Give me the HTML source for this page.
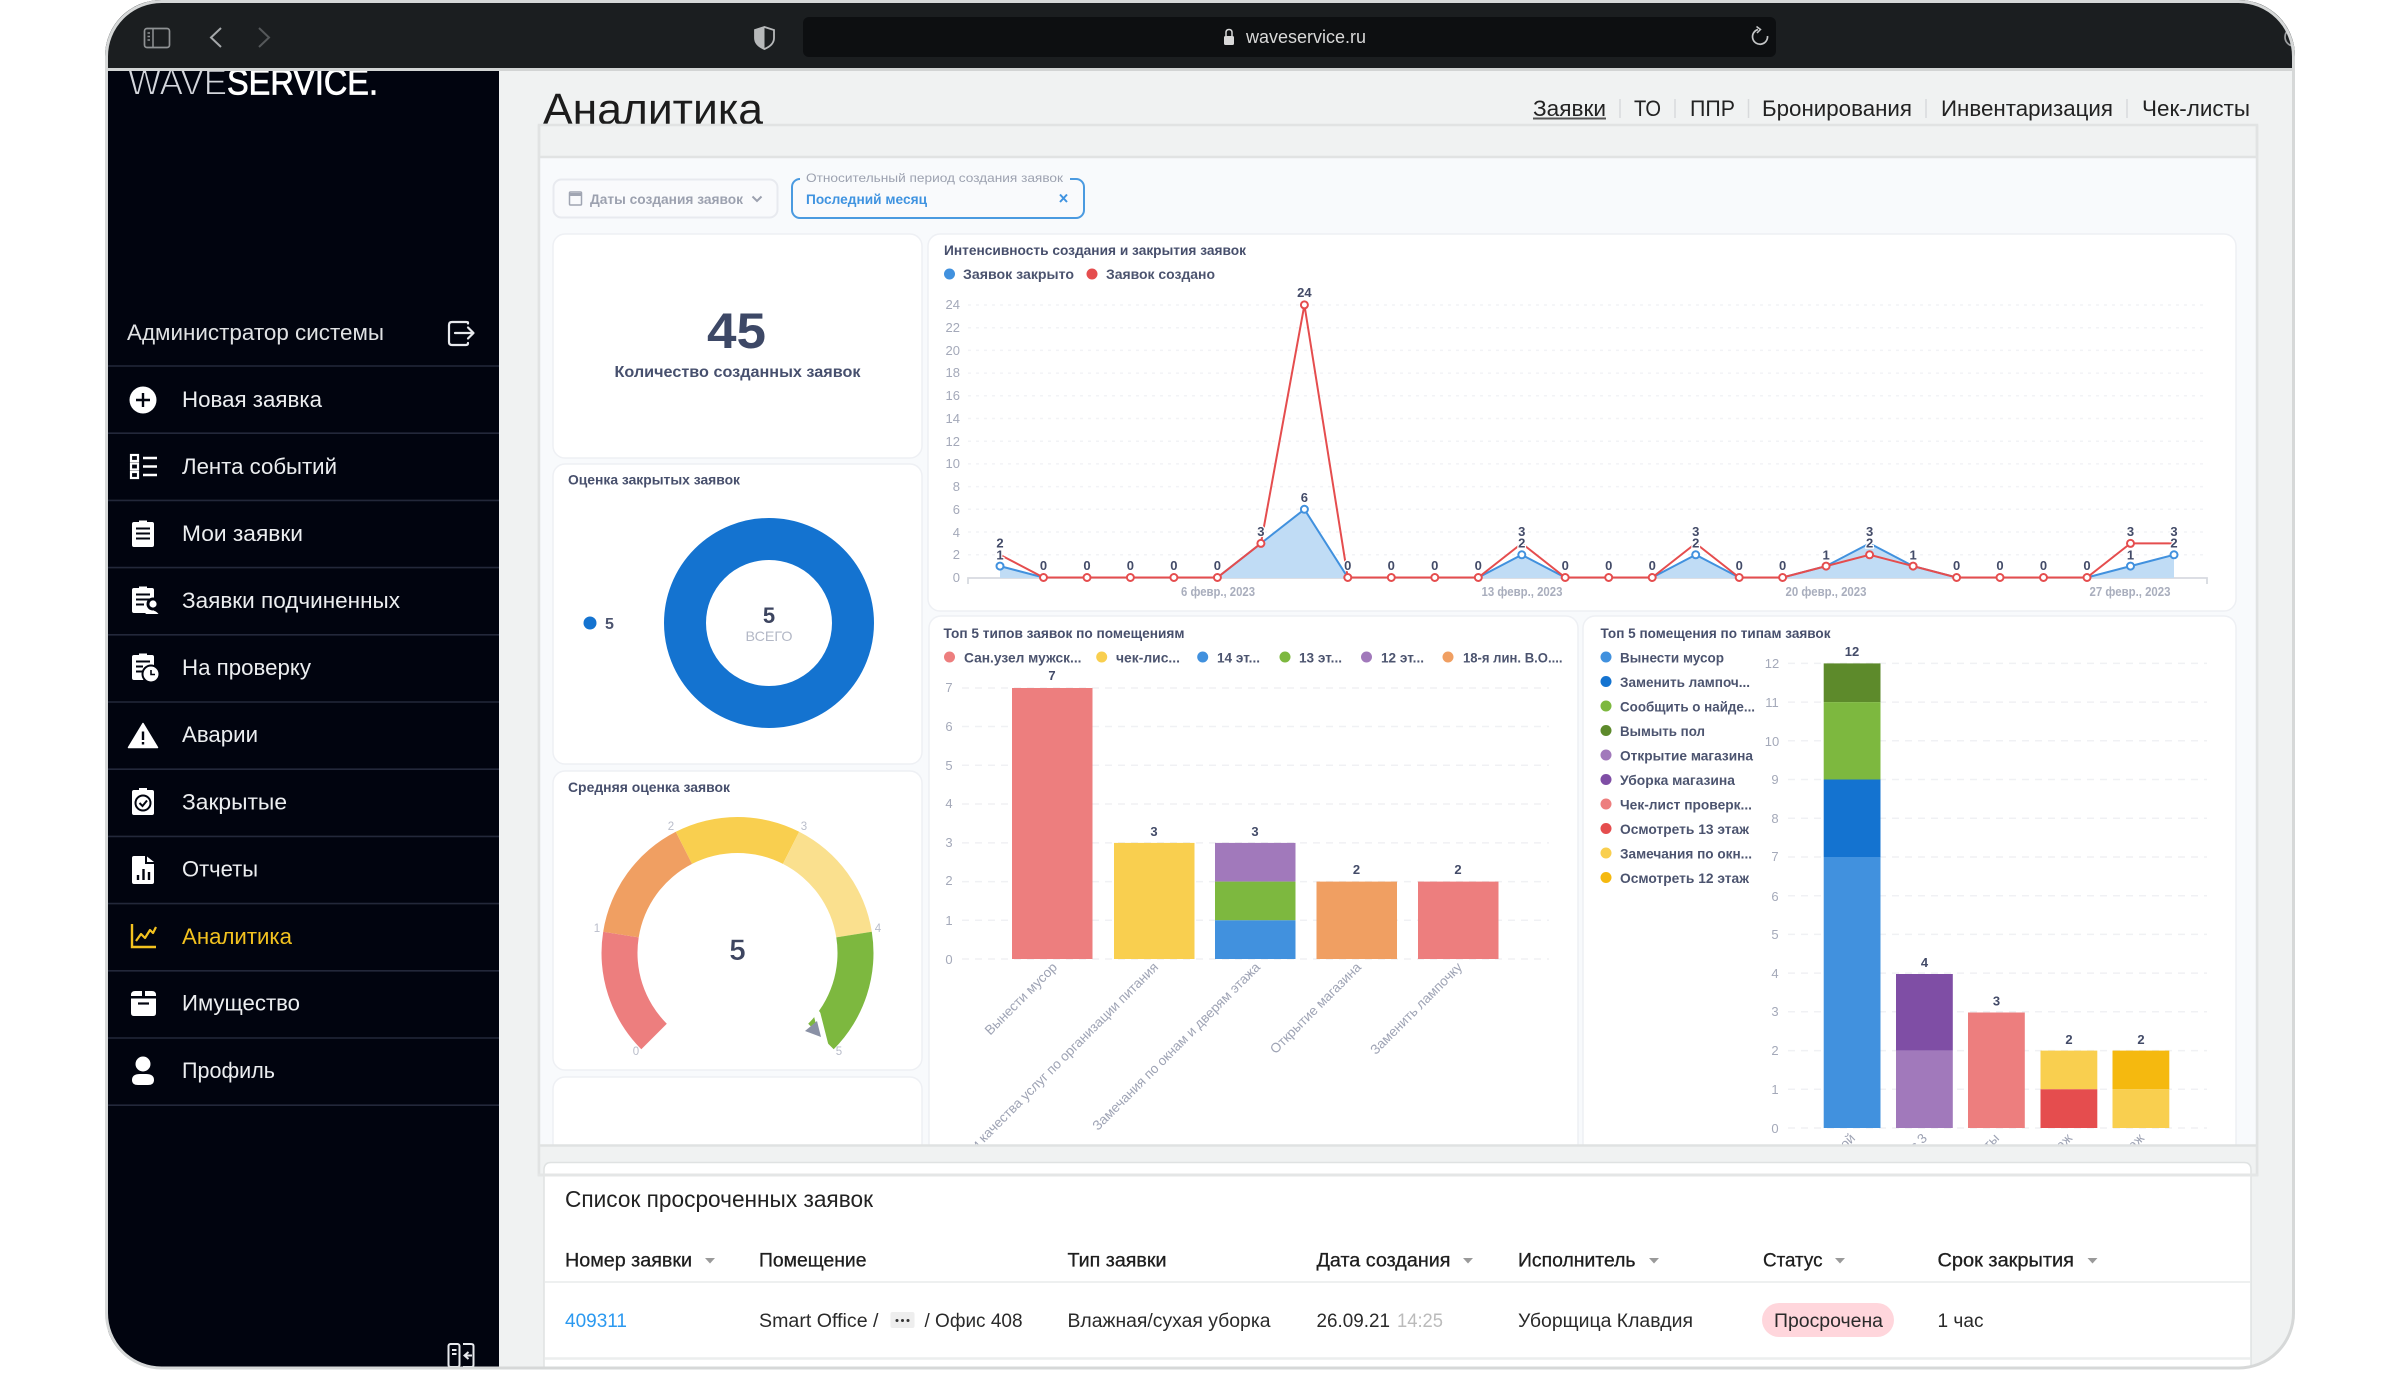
<!DOCTYPE html>
<html lang="ru"><head><meta charset="utf-8"><title>Аналитика</title>
<style>
html,body{margin:0;padding:0;background:#fff;width:2400px;height:1380px;overflow:hidden}
svg{display:block}
text{font-family:"Liberation Sans","DejaVu Sans",sans-serif}
.nav{font-size:22px;fill:#eceef0}
.tab{font-size:22px;fill:#222}
.t{font-size:14px;font-weight:bold;fill:#474f6c}
.lg{font-size:14px;font-weight:bold;fill:#4c546f}
.ax{font-size:13px;fill:#a4a9b9}
.v{font-size:13px;font-weight:bold;fill:#434b68;text-anchor:middle;paint-order:stroke;stroke:#fff;stroke-width:2.5px}
.rl{font-size:13.5px;fill:#9ea3b4;text-anchor:end}
.th{font-size:19px;fill:#1e1e1e;stroke:#1e1e1e;stroke-width:.3px}
.td{font-size:19px;fill:#2a2a2a}
</style></head><body>
<svg width="2400" height="1380" viewBox="0 0 2400 1380" xmlns="http://www.w3.org/2000/svg">
<defs>
<clipPath id="dev"><rect x="105" y="0" width="2190" height="1369" rx="56"/></clipPath>
<clipPath id="charts"><rect x="540" y="160" width="1716" height="985"/></clipPath>
<clipPath id="side"><rect x="108" y="71" width="391" height="1300"/></clipPath>
</defs>
<rect width="2400" height="1380" fill="#fff"/>
<g clip-path="url(#dev)">
<rect x="105" y="0" width="2190" height="1369" fill="#f0f2f2"/>

<!-- sidebar -->
<rect x="108" y="71" width="391" height="1300" fill="#01040f"/>
<g clip-path="url(#side)">
<text x="128" y="94.500" font-size="36" fill="#d4d6dc" stroke="#01040f" stroke-width="1" textLength="99" lengthAdjust="spacingAndGlyphs">WAVE</text>
<text x="227" y="94.500" font-size="36" fill="#fff" stroke="#fff" stroke-width=".8" textLength="151" lengthAdjust="spacingAndGlyphs">SERVICE.</text>
</g>
<text x="127" y="340" class="nav" fill-opacity=".95" textLength="257" lengthAdjust="spacingAndGlyphs">Администратор системы</text>
<g fill="none" stroke="#e8eaee" stroke-width="2.2" stroke-linecap="round" stroke-linejoin="round">
<path d="M468 323.5V322.5Q468 322 466 322H452Q449 322 449 325V342Q449 345 452 345H466Q468 345 468 343"/>
<path d="M455 333H473M468 327.5L473.5 333L468 338.5"/>
</g>
<g stroke="#23283a" stroke-width="1.6">
<path d="M108 366H499M108 433.2H499M108 500.4H499M108 567.6H499M108 634.8H499M108 702H499M108 769.2H499M108 836.4H499M108 903.6H499M108 970.8H499M108 1038H499M108 1105.2H499"/>
</g>
<text x="182" y="407" class="nav" textLength="140" lengthAdjust="spacingAndGlyphs">Новая заявка</text>
<text x="182" y="474" class="nav" textLength="155" lengthAdjust="spacingAndGlyphs">Лента событий</text>
<text x="182" y="541" class="nav" textLength="121" lengthAdjust="spacingAndGlyphs">Мои заявки</text>
<text x="182" y="608" class="nav" textLength="218" lengthAdjust="spacingAndGlyphs">Заявки подчиненных</text>
<text x="182" y="675" class="nav" textLength="129" lengthAdjust="spacingAndGlyphs">На проверку</text>
<text x="182" y="742" class="nav" textLength="76" lengthAdjust="spacingAndGlyphs">Аварии</text>
<text x="182" y="809.500" class="nav" textLength="105" lengthAdjust="spacingAndGlyphs">Закрытые</text>
<text x="182" y="876.500" class="nav" textLength="76" lengthAdjust="spacingAndGlyphs">Отчеты</text>
<text x="182" y="944" font-size="22" fill="#f3c21f" textLength="110" lengthAdjust="spacingAndGlyphs">Аналитика</text>
<text x="182" y="1010.500" class="nav" textLength="118" lengthAdjust="spacingAndGlyphs">Имущество</text>
<text x="182" y="1078" class="nav" textLength="93" lengthAdjust="spacingAndGlyphs">Профиль</text>

<!-- nav icons -->
<circle cx="143" cy="400" r="13.5" fill="#fff"/>
<path d="M143 393V407M136 400H150" stroke="#01040f" stroke-width="2.4"/>
<g fill="none" stroke="#fff" stroke-width="2.2"><rect x="131" y="455" width="7" height="6"/><rect x="131" y="463.5" width="7" height="6"/><rect x="131" y="472" width="7" height="6"/></g>
<path d="M143 458H157M143 466.5H157M143 475H157" stroke="#fff" stroke-width="2.4"/>
<path d="M134 522H139V520.5H147V522H152Q154 522 154 524V545Q154 547 152 547H134Q132 547 132 545V524Q132 522 134 522Z" fill="#fff"/>
<path d="M136 528.5H150M136 533.5H150M136 538.5H150" stroke="#01040f" stroke-width="2"/>
<path d="M134 588H139V586.5H147V588H152Q154 588 154 590V611Q154 613 152 613H134Q132 613 132 611V590Q132 588 134 588Z" fill="#fff"/>
<path d="M136 594.5H150M136 599.5H150M136 604.5H144" stroke="#01040f" stroke-width="2"/>
<circle cx="153" cy="604" r="6.5" fill="#01040f"/><circle cx="153" cy="604" r="3.6" fill="#fff"/><path d="M145 614Q153 607 158.500 614Z" fill="#fff"/>
<path d="M134 655H139V653.500H147V655H152Q154 655 154 657V678Q154 680 152 680H134Q132 680 132 678V657Q132 655 134 655Z" fill="#fff"/>
<path d="M136 661.500H150M136 666.500H143M136 671.500H143" stroke="#01040f" stroke-width="2"/>
<circle cx="151" cy="674" r="8.500" fill="#fff" stroke="#01040f" stroke-width="2"/><path d="M151 670V674.500H155" fill="none" stroke="#01040f" stroke-width="1.600"/>
<path d="M143 723.500L157.500 747.500H128.500Z" fill="#fff" stroke="#fff" stroke-width="1.500" stroke-linejoin="round"/>
<path d="M143 731.500V740M143 742V744.500" stroke="#01040f" stroke-width="2.400"/>
<path d="M134 790H139V788H147V790H152Q154 790 154 792V813Q154 815 152 815H134Q132 815 132 813V792Q132 790 134 790Z" fill="#fff"/>
<circle cx="143" cy="803" r="7.500" fill="none" stroke="#01040f" stroke-width="2"/><path d="M139.500 803L142.500 806L147 800.500" fill="none" stroke="#01040f" stroke-width="2"/>
<path d="M134 856H145V864H154V882Q154 884 152 884H134Q132 884 132 882V858Q132 856 134 856ZM147 856.500L154 862H147Z" fill="#fff"/>
<path d="M138 880V875M143.500 880V869M149 880V872" stroke="#01040f" stroke-width="2.400"/>
<path d="M132 924V947H156" fill="none" stroke="#f3c21f" stroke-width="2.400"/>
<path d="M136 941L141 934L145 938L150 930L153 933L156 927" fill="none" stroke="#f3c21f" stroke-width="2.200" stroke-linejoin="round"/>
<path d="M135 991H142V996H131V995Q131 991 135 991ZM145 991H152Q156 991 156 995V996H145Z" fill="#fff"/>
<path d="M131 998.500H156V1013Q156 1016 153 1016H134Q131 1016 131 1013Z" fill="#fff"/>
<path d="M138 1003.500H149" stroke="#01040f" stroke-width="2.200"/>
<circle cx="143" cy="1064" r="7.500" fill="#fff"/>
<path d="M132 1080Q132 1074 140 1074H146Q154 1074 154 1080Q154 1085 148 1085H138Q132 1085 132 1080Z" fill="#fff"/>
<g fill="none" stroke="#e8eaee" stroke-width="2"><rect x="448.500" y="1344" width="11" height="23" rx="2"/><path d="M463 1367H471Q473.500 1367 473.500 1365V1346Q473.500 1344 471 1344H463"/><path d="M452 1350H456.500M452 1354H456.500"/><path d="M472 1355.500H465M468.500 1352L464.500 1355.500L468.500 1359"/></g>

<!-- title and tabs -->
<text x="543" y="124" font-size="44" fill="#1c1c1c" textLength="220" lengthAdjust="spacingAndGlyphs">Аналитика</text>
<text x="1533" y="116" class="tab" textLength="73" lengthAdjust="spacingAndGlyphs">Заявки</text>
<path d="M1533 118.500H1606" stroke="#555" stroke-width="2"/>
<text x="1634" y="116" class="tab" textLength="27" lengthAdjust="spacingAndGlyphs">ТО</text>
<text x="1690" y="116" class="tab" textLength="45" lengthAdjust="spacingAndGlyphs">ППР</text>
<text x="1762" y="116" class="tab" textLength="150" lengthAdjust="spacingAndGlyphs">Бронирования</text>
<text x="1941" y="116" class="tab" textLength="172" lengthAdjust="spacingAndGlyphs">Инвентаризация</text>
<text x="2142" y="116" class="tab" textLength="108" lengthAdjust="spacingAndGlyphs">Чек-листы</text>
<path d="M1620 99V118M1675 99V118M1748.500 99V118M1926 99V118M2127 99V118" stroke="#d8dadc" stroke-width="1.500"/>

<!-- panel -->
<rect x="539" y="125" width="1718" height="1050" fill="#f0f2f2" stroke="#e1e3e3" stroke-width="2.500"/>
<rect x="540" y="158" width="1716" height="987" fill="#f8fafc"/>
<path d="M540 157H2256" stroke="#e1e3e3" stroke-width="2.500"/>

<!-- filters -->
<rect x="553.500" y="179.500" width="224" height="38" rx="8" fill="#f9fafc" stroke="#e8eaef" stroke-width="2"/>
<rect x="569.500" y="192" width="12" height="13" rx="1" fill="none" stroke="#a0a5b2" stroke-width="1.500"/><path d="M569.500 194.500H581.500" stroke="#a0a5b2" stroke-width="3"/>
<text x="590" y="204" font-size="14" font-weight="bold" fill="#9ca1af" textLength="153" lengthAdjust="spacingAndGlyphs">Даты создания заявок</text>
<path d="M752.500 196.500L757 201L761.500 196.500" fill="none" stroke="#9ca1af" stroke-width="2"/>
<rect x="792" y="179" width="292" height="39" rx="8" fill="#f9fafc" stroke="#4a9ae0" stroke-width="2"/>
<rect x="800" y="172" width="270" height="12" fill="#f8fafc"/>
<text x="806" y="182" font-size="12" fill="#9ca1af" textLength="257" lengthAdjust="spacingAndGlyphs">Относительный период создания заявок</text>
<text x="806" y="204" font-size="14" font-weight="bold" fill="#3f93e0" textLength="121" lengthAdjust="spacingAndGlyphs">Последний месяц</text>
<path d="M1060 194.500L1067 202M1067 194.500L1060 202" stroke="#3f93e0" stroke-width="2"/>

<!-- cards -->
<g fill="#fff" stroke="#eef0f4" stroke-width="1.500">
<rect x="553" y="234" width="369" height="224" rx="12"/>
<rect x="553" y="464" width="369" height="300" rx="12"/>
<rect x="553" y="771" width="369" height="299" rx="12"/>
<rect x="553" y="1077" width="369" height="100" rx="12"/>
<rect x="928" y="234" width="1308" height="377" rx="12"/>
<rect x="929" y="616" width="649" height="560" rx="12"/>
<rect x="1583" y="616" width="653" height="560" rx="12"/>
</g>

<!-- 45 -->
<text x="736.500" y="348" font-size="50" font-weight="bold" fill="#3d4866" text-anchor="middle" textLength="59" lengthAdjust="spacingAndGlyphs">45</text>
<text x="614.500" y="377" font-size="16" font-weight="bold" fill="#47506e" textLength="246" lengthAdjust="spacingAndGlyphs">Количество созданных заявок</text>

<!-- donut -->
<text x="568" y="484.500" class="t" textLength="172" lengthAdjust="spacingAndGlyphs">Оценка закрытых заявок</text>
<circle cx="769" cy="623" r="84" fill="none" stroke="#1473d0" stroke-width="42"/>
<circle cx="590" cy="623" r="6.500" fill="#1473d0"/>
<text x="605" y="629" font-size="16" font-weight="bold" fill="#4c546f">5</text>
<text x="769" y="623" font-size="22" font-weight="bold" fill="#3d4560" text-anchor="middle">5</text>
<text x="769" y="641" font-size="14" fill="#b3b8c6" text-anchor="middle" textLength="47" lengthAdjust="spacingAndGlyphs">ВСЕГО</text>

<!-- gauge -->
<text x="568" y="792" class="t" textLength="162" lengthAdjust="spacingAndGlyphs">Средняя оценка заявок</text>
<path d="M641.300 1049.200A136 136 0 0 1 603.200 931.700L638.700 937.400A100 100 0 0 0 666.800 1023.700Z" fill="#ed7e7e"/>
<path d="M603.200 931.700A136 136 0 0 1 675.800 831.800L692.100 863.900A100 100 0 0 0 638.700 937.400Z" fill="#f09f62"/>
<path d="M675.800 831.800A136 136 0 0 1 799.200 831.800L782.900 863.900A100 100 0 0 0 692.100 863.900Z" fill="#f9cf4f"/>
<path d="M799.200 831.800A136 136 0 0 1 871.800 931.700L836.300 937.400A100 100 0 0 0 782.900 863.900Z" fill="#fae08e"/>
<path d="M871.800 931.700A136 136 0 0 1 833.700 1049.200L808.200 1023.700A100 100 0 0 0 836.300 937.400Z" fill="#7db83f"/>
<path d="M817 1014L825.500 1047.500" stroke="#fff" stroke-width="7" stroke-linecap="round"/>
<path d="M805 1031L817 1021L821 1037Z" fill="#8a91a5"/>
<text x="737.500" y="960" font-size="30" font-weight="bold" fill="#3d4560" text-anchor="middle" stroke="#fff" stroke-width=".6">5</text>
<g font-size="11.500" fill="#b9bdca" text-anchor="middle">
<text x="636" y="1055">0</text><text x="597" y="932">1</text><text x="671" y="830">2</text><text x="804" y="830">3</text><text x="878" y="932">4</text><text x="839" y="1055">5</text>
</g>

<!-- line chart -->
<text x="944" y="255" class="t" textLength="302" lengthAdjust="spacingAndGlyphs">Интенсивность создания и закрытия заявок</text>
<circle cx="949.500" cy="274" r="5.500" fill="#4191de"/>
<text x="963" y="279" class="lg" textLength="111" lengthAdjust="spacingAndGlyphs">Заявок закрыто</text>
<circle cx="1092" cy="274" r="5.500" fill="#e54d4e"/>
<text x="1106" y="279" class="lg" textLength="109" lengthAdjust="spacingAndGlyphs">Заявок создано</text>
<g stroke="#f2f3f6" stroke-width="1.500" stroke-dasharray="3 5">
<path d="M968 305H2207M968 327.700H2207M968 350.400H2207M968 373.100H2207M968 395.800H2207M968 418.500H2207M968 441.200H2207M968 463.900H2207M968 486.600H2207M968 509.300H2207M968 532H2207M968 554.800H2207"/>
</g>
<g class="ax" text-anchor="end">
<text x="960" y="309">24</text><text x="960" y="332">22</text><text x="960" y="355">20</text><text x="960" y="377">18</text><text x="960" y="400">16</text><text x="960" y="423">14</text><text x="960" y="446">12</text><text x="960" y="468">10</text><text x="960" y="491">8</text><text x="960" y="514">6</text><text x="960" y="537">4</text><text x="960" y="559">2</text><text x="960" y="582">0</text>
</g>
<path d="M968 584V578H2207V584" fill="none" stroke="#d7dae0" stroke-width="1.800"/>
<path d="M1000 578V566.100L1043.500 577.500H1217.400L1260.900 543.400L1304.400 509.300L1347.800 577.500H1478.300L1521.800 554.800L1565.200 577.500H1652.200L1695.700 554.800L1739.200 577.500H1782.600L1826.100 566.100L1869.600 543.400L1913.100 566.100L1956.600 577.500H2087L2130.500 566.100L2174 554.800V578Z" fill="#c0dcf5"/>
<path d="M1000 566.100L1043.500 577.500H1217.400L1260.900 543.400L1304.400 509.300L1347.800 577.500H1478.300L1521.800 554.800L1565.200 577.500H1652.200L1695.700 554.800L1739.200 577.500H1782.600L1826.100 566.100L1869.600 543.400L1913.100 566.100L1956.600 577.500H2087L2130.500 566.100L2174 554.800" fill="none" stroke="#4191de" stroke-width="2"/>
<g fill="#fff" stroke="#4191de" stroke-width="2">
<circle cx="1000" cy="566.100" r="3.500"/><circle cx="1304.400" cy="509.300" r="3.500"/><circle cx="1521.800" cy="554.800" r="3.500"/><circle cx="1695.700" cy="554.800" r="3.500"/><circle cx="2130.500" cy="566.100" r="3.500"/><circle cx="2174" cy="554.800" r="3.500"/>
</g>
<path d="M1000 554.800L1043.500 577.500H1217.400L1260.900 543.400L1304.400 304.900L1347.800 577.500H1478.300L1521.800 543.400L1565.200 577.500H1652.200L1695.700 543.400L1739.200 577.500H1782.600L1826.100 566.100L1869.600 554.800L1913.100 566.100L1956.600 577.500H2087L2130.500 543.400H2174" fill="none" stroke="#e54d4e" stroke-width="2"/>
<g fill="#fff" stroke="#e54d4e" stroke-width="2">
<circle cx="1043.500" cy="577.500" r="3.500"/><circle cx="1087" cy="577.500" r="3.500"/><circle cx="1130.400" cy="577.500" r="3.500"/><circle cx="1173.900" cy="577.500" r="3.500"/><circle cx="1217.400" cy="577.500" r="3.500"/><circle cx="1260.900" cy="543.400" r="3.500"/><circle cx="1304.400" cy="304.900" r="3.500"/><circle cx="1347.800" cy="577.500" r="3.500"/><circle cx="1391.300" cy="577.500" r="3.500"/><circle cx="1434.800" cy="577.500" r="3.500"/><circle cx="1478.300" cy="577.500" r="3.500"/><circle cx="1565.200" cy="577.500" r="3.500"/><circle cx="1608.700" cy="577.500" r="3.500"/><circle cx="1652.200" cy="577.500" r="3.500"/><circle cx="1739.200" cy="577.500" r="3.500"/><circle cx="1782.600" cy="577.500" r="3.500"/><circle cx="1826.100" cy="566.100" r="3.500"/><circle cx="1869.600" cy="554.800" r="3.500"/><circle cx="1913.100" cy="566.100" r="3.500"/><circle cx="1956.600" cy="577.500" r="3.500"/><circle cx="2000" cy="577.500" r="3.500"/><circle cx="2043.500" cy="577.500" r="3.500"/><circle cx="2087" cy="577.500" r="3.500"/><circle cx="2130.500" cy="543.400" r="3.500"/>
</g>
<g class="v">
<text x="1000" y="547.500">2</text><text x="1000" y="559.500">1</text>
<text x="1043.500" y="570">0</text><text x="1087" y="570">0</text><text x="1130.400" y="570">0</text><text x="1173.900" y="570">0</text><text x="1217.400" y="570">0</text>
<text x="1260.900" y="536">3</text><text x="1304.400" y="297">24</text><text x="1304.400" y="502">6</text>
<text x="1347.800" y="570">0</text><text x="1391.300" y="570">0</text><text x="1434.800" y="570">0</text><text x="1478.300" y="570">0</text>
<text x="1521.800" y="536">3</text><text x="1521.800" y="547.500">2</text>
<text x="1565.200" y="570">0</text><text x="1608.700" y="570">0</text><text x="1652.200" y="570">0</text>
<text x="1695.700" y="536">3</text><text x="1695.700" y="547.500">2</text>
<text x="1739.200" y="570">0</text><text x="1782.600" y="570">0</text>
<text x="1826.100" y="559.500">1</text>
<text x="1869.600" y="536">3</text><text x="1869.600" y="547.500">2</text>
<text x="1913.100" y="559.500">1</text>
<text x="1956.600" y="570">0</text><text x="2000" y="570">0</text><text x="2043.500" y="570">0</text><text x="2087" y="570">0</text>
<text x="2130.500" y="536">3</text><text x="2130.500" y="559.500">1</text>
<text x="2174" y="536">3</text><text x="2174" y="547.500">2</text>
</g>
<g font-size="13" font-weight="bold" fill="#a9aebd" text-anchor="middle">
<text x="1218" y="596" textLength="74" lengthAdjust="spacingAndGlyphs">6 февр., 2023</text>
<text x="1522" y="596" textLength="81" lengthAdjust="spacingAndGlyphs">13 февр., 2023</text>
<text x="1826" y="596" textLength="81" lengthAdjust="spacingAndGlyphs">20 февр., 2023</text>
<text x="2130" y="596" textLength="81" lengthAdjust="spacingAndGlyphs">27 февр., 2023</text>
</g>

<g clip-path="url(#charts)">
<!-- bar chart 1 -->
<text x="943.500" y="638" class="t" textLength="241" lengthAdjust="spacingAndGlyphs">Топ 5 типов заявок по помещениям</text>
<circle cx="949.500" cy="657" r="5.500" fill="#ed7e7e"/><text x="964" y="662.500" class="lg" textLength="117.500" lengthAdjust="spacingAndGlyphs">Сан.узел мужск...</text>
<circle cx="1101.700" cy="657" r="5.500" fill="#f9cf4f"/><text x="1116" y="662.500" class="lg" textLength="64" lengthAdjust="spacingAndGlyphs">чек-лис...</text>
<circle cx="1202.700" cy="657" r="5.500" fill="#4191de"/><text x="1217" y="662.500" class="lg" textLength="43" lengthAdjust="spacingAndGlyphs">14 эт...</text>
<circle cx="1285" cy="657" r="5.500" fill="#7db83f"/><text x="1299" y="662.500" class="lg" textLength="43" lengthAdjust="spacingAndGlyphs">13 эт...</text>
<circle cx="1366.500" cy="657" r="5.500" fill="#a179bb"/><text x="1381" y="662.500" class="lg" textLength="43" lengthAdjust="spacingAndGlyphs">12 эт...</text>
<circle cx="1448" cy="657" r="5.500" fill="#f09f62"/><text x="1463" y="662.500" class="lg" textLength="99.500" lengthAdjust="spacingAndGlyphs">18-я лин. В.О....</text>
<g stroke="#f0f1f4" stroke-width="1.500" stroke-dasharray="7 6">
<path d="M962 688H1549M962 726.500H1549M962 765.300H1549M962 804H1549M962 842.900H1549M962 881.600H1549M962 920.300H1549M962 959H1549"/>
</g>
<g class="ax" text-anchor="middle" font-size="14">
<text x="949" y="692">7</text><text x="949" y="731">6</text><text x="949" y="770">5</text><text x="949" y="808">4</text><text x="949" y="847">3</text><text x="949" y="885">2</text><text x="949" y="925">1</text><text x="949" y="964">0</text>
</g>
<rect x="1012" y="688" width="80.500" height="271" fill="#ed7e7e"/>
<rect x="1114" y="842.900" width="80.500" height="116.100" fill="#f9cf4f"/>
<rect x="1215" y="842.900" width="80.500" height="38.700" fill="#a179bb"/>
<rect x="1215" y="881.600" width="80.500" height="38.700" fill="#7db83f"/>
<rect x="1215" y="920.300" width="80.500" height="38.700" fill="#4191de"/>
<rect x="1316.500" y="881.600" width="80.500" height="77.400" fill="#f09f62"/>
<rect x="1418" y="881.600" width="80.500" height="77.400" fill="#ed7e7e"/>
<g class="v">
<text x="1052" y="680">7</text><text x="1154" y="836">3</text><text x="1255" y="836">3</text><text x="1356.500" y="874">2</text><text x="1458" y="874">2</text>
</g>
<text class="rl" transform="translate(1058,968) rotate(-45)">Вынести мусор</text>
<text class="rl" transform="translate(1159,968) rotate(-45)">Проверки качества услуг по организации питания</text>
<text class="rl" transform="translate(1261,968) rotate(-45)">Замечания по окнам и дверям этажа</text>
<text class="rl" transform="translate(1362,968) rotate(-45)">Открытие магазина</text>
<text class="rl" transform="translate(1463,968) rotate(-45)">Заменить лампочку</text>

<!-- bar chart 2 -->
<text x="1600.500" y="638" class="t" textLength="230" lengthAdjust="spacingAndGlyphs">Топ 5 помещения по типам заявок</text>
<circle cx="1606" cy="657" r="5.500" fill="#4191de"/><text x="1620" y="662.500" class="lg" textLength="104" lengthAdjust="spacingAndGlyphs">Вынести мусор</text>
<circle cx="1606" cy="681.500" r="5.500" fill="#1473d0"/><text x="1620" y="687" class="lg" textLength="130" lengthAdjust="spacingAndGlyphs">Заменить лампоч...</text>
<circle cx="1606" cy="706" r="5.500" fill="#7db83f"/><text x="1620" y="711.500" class="lg" textLength="135" lengthAdjust="spacingAndGlyphs">Сообщить о найде...</text>
<circle cx="1606" cy="730.500" r="5.500" fill="#5d8a2b"/><text x="1620" y="736" class="lg" textLength="85" lengthAdjust="spacingAndGlyphs">Вымыть пол</text>
<circle cx="1606" cy="755" r="5.500" fill="#a179bb"/><text x="1620" y="760.500" class="lg" textLength="133" lengthAdjust="spacingAndGlyphs">Открытие магазина</text>
<circle cx="1606" cy="779.500" r="5.500" fill="#7f4ea5"/><text x="1620" y="785" class="lg" textLength="115" lengthAdjust="spacingAndGlyphs">Уборка магазина</text>
<circle cx="1606" cy="804" r="5.500" fill="#ed7e7e"/><text x="1620" y="809.500" class="lg" textLength="132" lengthAdjust="spacingAndGlyphs">Чек-лист проверк...</text>
<circle cx="1606" cy="828.500" r="5.500" fill="#e54d4e"/><text x="1620" y="834" class="lg" textLength="129" lengthAdjust="spacingAndGlyphs">Осмотреть 13 этаж</text>
<circle cx="1606" cy="853" r="5.500" fill="#f9cf4f"/><text x="1620" y="858.500" class="lg" textLength="132" lengthAdjust="spacingAndGlyphs">Замечания по окн...</text>
<circle cx="1606" cy="877.500" r="5.500" fill="#f5b90f"/><text x="1620" y="883" class="lg" textLength="129" lengthAdjust="spacingAndGlyphs">Осмотреть 12 этаж</text>
<g stroke="#f0f1f4" stroke-width="1.500" stroke-dasharray="7 6">
<path d="M1788 663.400H2207M1788 702.100H2207M1788 740.800H2207M1788 779.500H2207M1788 818.300H2207M1788 857H2207M1788 895.700H2207M1788 934.400H2207M1788 973.100H2207M1788 1011.800H2207M1788 1050.600H2207M1788 1089.300H2207M1788 1128H2207"/>
</g>
<g class="ax" text-anchor="middle" font-size="14">
<text x="1772" y="668">12</text><text x="1772" y="707">11</text><text x="1772" y="746">10</text><text x="1775" y="784">9</text><text x="1775" y="823">8</text><text x="1775" y="861">7</text><text x="1775" y="901">6</text><text x="1775" y="939">5</text><text x="1775" y="978">4</text><text x="1775" y="1016">3</text><text x="1775" y="1055">2</text><text x="1775" y="1094">1</text><text x="1775" y="1133">0</text>
</g>
<rect x="1823.700" y="663.400" width="56.800" height="38.700" fill="#5d8a2b"/>
<rect x="1823.700" y="702.100" width="56.800" height="77.400" fill="#7db83f"/>
<rect x="1823.700" y="779.500" width="56.800" height="77.500" fill="#1473d0"/>
<rect x="1823.700" y="857" width="56.800" height="271" fill="#4191de"/>
<rect x="1896" y="974" width="56.800" height="76.600" fill="#7f4ea5"/>
<rect x="1896" y="1050.600" width="56.800" height="77.400" fill="#a179bb"/>
<rect x="1968" y="1012.500" width="56.800" height="115.500" fill="#ed7e7e"/>
<rect x="2040.500" y="1050.600" width="56.800" height="38.700" fill="#f9cf4f"/>
<rect x="2040.500" y="1089.300" width="56.800" height="38.700" fill="#e54d4e"/>
<rect x="2112.500" y="1050.600" width="56.800" height="38.700" fill="#f5b90f"/>
<rect x="2112.500" y="1089.300" width="56.800" height="38.700" fill="#f9cf4f"/>
<g class="v">
<text x="1852" y="656">12</text><text x="1924.500" y="967">4</text><text x="1996.500" y="1005.500">3</text><text x="2069" y="1044">2</text><text x="2141" y="1044">2</text>
</g>
<text class="rl" transform="translate(1856,1139) rotate(-45)">Сан.узел мужской</text>
<text class="rl" transform="translate(1928,1139) rotate(-45)">Офис 3</text>
<text class="rl" transform="translate(2000,1139) rotate(-45)">Комнаты</text>
<text class="rl" transform="translate(2073,1139) rotate(-45)">13 этаж</text>
<text class="rl" transform="translate(2145,1139) rotate(-45)">12 этаж</text>
</g>

<!-- panel bottom -->
<rect x="540" y="1146" width="1716" height="28" fill="#f0f2f2"/>
<path d="M540 1145.500H2256" stroke="#dfe2e2" stroke-width="2.500"/>
<path d="M539 125V1175H2257V125" fill="none" stroke="#e1e3e3" stroke-width="2.500"/>

<!-- table card -->
<path d="M544 1380V1170Q544 1162.500 551 1162.500H2244Q2251 1162.500 2251 1170V1380Z" fill="#fff" stroke="#dfe2e2" stroke-width="1.500"/>
<path d="M538 1175H2258" stroke="#e4e6e6" stroke-width="3"/>
<path d="M545 1282H2250" stroke="#e9ebeb" stroke-width="1.500"/>
<path d="M545 1358.500H2250" stroke="#eceeee" stroke-width="2.500"/>
<text x="565" y="1207" font-size="23" fill="#222" textLength="308" lengthAdjust="spacingAndGlyphs">Список просроченных заявок</text>
<text x="565" y="1266.500" class="th" textLength="127" lengthAdjust="spacingAndGlyphs">Номер заявки</text>
<text x="759" y="1266.500" class="th" textLength="107.500" lengthAdjust="spacingAndGlyphs">Помещение</text>
<text x="1067.500" y="1266.500" class="th" textLength="99" lengthAdjust="spacingAndGlyphs">Тип заявки</text>
<text x="1316.500" y="1266.500" class="th" textLength="134" lengthAdjust="spacingAndGlyphs">Дата создания</text>
<text x="1518" y="1266.500" class="th" textLength="117.500" lengthAdjust="spacingAndGlyphs">Исполнитель</text>
<text x="1763" y="1266.500" class="th" textLength="59.500" lengthAdjust="spacingAndGlyphs">Статус</text>
<text x="1937.500" y="1266.500" class="th" textLength="136.500" lengthAdjust="spacingAndGlyphs">Срок закрытия</text>
<g fill="#9a9a9a">
<path d="M705 1258H715L710 1263.500Z"/><path d="M1463 1258H1473L1468 1263.500Z"/><path d="M1649 1258H1659L1654 1263.500Z"/><path d="M1835 1258H1845L1840 1263.500Z"/><path d="M2087.500 1258H2097.500L2092.500 1263.500Z"/>
</g>
<text x="565" y="1327" font-size="19" fill="#2b99f0" textLength="62" lengthAdjust="spacingAndGlyphs">409311</text>
<text x="759" y="1327" class="td" textLength="119.500" lengthAdjust="spacingAndGlyphs">Smart Office /</text>
<rect x="890.500" y="1312" width="24" height="16" rx="2" fill="#eeeeee"/>
<circle cx="897" cy="1320.500" r="1.500" fill="#333"/><circle cx="902.500" cy="1320.500" r="1.500" fill="#333"/><circle cx="908" cy="1320.500" r="1.500" fill="#333"/>
<text x="924.500" y="1327" class="td" textLength="98" lengthAdjust="spacingAndGlyphs">/ Офис 408</text>
<text x="1067.500" y="1327" class="td" textLength="203" lengthAdjust="spacingAndGlyphs">Влажная/сухая уборка</text>
<text x="1316.500" y="1327" class="td" textLength="73.500" lengthAdjust="spacingAndGlyphs">26.09.21</text>
<text x="1397" y="1327" font-size="19" fill="#bbbbbb" textLength="46" lengthAdjust="spacingAndGlyphs">14:25</text>
<text x="1518" y="1327" class="td" textLength="175" lengthAdjust="spacingAndGlyphs">Уборщица Клавдия</text>
<rect x="1762" y="1303" width="132" height="34" rx="17" fill="#ffd6dc"/>
<text x="1774" y="1327" class="td" textLength="109" lengthAdjust="spacingAndGlyphs">Просрочена</text>
<text x="1937.500" y="1327" class="td" textLength="46" lengthAdjust="spacingAndGlyphs">1 час</text>

<!-- browser bar -->
<rect x="105" y="0" width="2190" height="68" fill="#1b1e20"/>
<rect x="105" y="68" width="2190" height="3" fill="#d2d4d4"/>
<rect x="803" y="17" width="973" height="40" rx="6" fill="#0d0f11"/>
<rect x="144.500" y="28.500" width="25" height="19" rx="2.500" fill="none" stroke="#8f9294" stroke-width="1.700"/>
<path d="M153 28.500V47.500M147.500 33H150M147.500 36.500H150M147.500 40H150" stroke="#8f9294" stroke-width="1.500"/>
<path d="M221 28L211 37.500L221 47" fill="none" stroke="#a5a8aa" stroke-width="2"/>
<path d="M259 28L269 37.500L259 47" fill="none" stroke="#55585a" stroke-width="2"/>
<path d="M764.500 27L774 30V38Q774 45 764.500 49Q755 45 755 38V30Z" fill="none" stroke="#b7b9ba" stroke-width="1.800"/>
<path d="M764.500 27V49Q755 45 755 38V30Z" fill="#b7b9ba"/>
<rect x="1224" y="36" width="10" height="9" rx="1.500" fill="#d8d8d8"/>
<path d="M1226 36V32.500Q1226 29.500 1229 29.500Q1232 29.500 1232 32.500V36" fill="none" stroke="#d8d8d8" stroke-width="1.500"/>
<text x="1246" y="43" font-size="18" fill="#d8d8d8" textLength="120" lengthAdjust="spacingAndGlyphs">waveservice.ru</text>
<path d="M1758 29.500A7.500 7.500 0 1 0 1767.500 36" fill="none" stroke="#c4c6c7" stroke-width="1.700"/>
<path d="M1756.500 26.500L1760.500 29.500L1757 33" fill="none" stroke="#c4c6c7" stroke-width="1.500"/>
<circle cx="2294" cy="37" r="9" fill="none" stroke="#9b9d9f" stroke-width="1.700"/>
</g>
<!-- device bezel -->
<rect x="106.500" y="1.500" width="2187" height="1366.500" rx="55" fill="none" stroke="#d6d8d8" stroke-width="3"/>
</svg>
</body></html>
